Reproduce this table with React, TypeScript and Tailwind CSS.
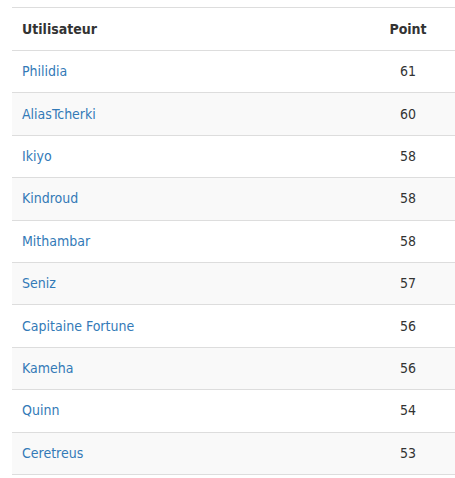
const rows: [string, number][] = [
  ['Philidia', 61],
  ['AliasTcherki', 60],
  ['Ikiyo', 58],
  ['Kindroud', 58],
  ['Mithambar', 58],
  ['Seniz', 57],
  ['Capitaine Fortune', 56],
  ['Kameha', 56],
  ['Quinn', 54],
  ['Ceretreus', 53],
];

export default function App() {
  return (
    <div
      className="bg-white pl-3 pt-[7px] text-[14px] text-[#333]"
      style={{ fontFamily: '"DejaVu Sans Condensed", "DejaVu Sans", Verdana, sans-serif' }}
    >
      <table className="w-[443px] border-collapse">
        <thead>
          <tr className="h-[43px] border-y border-[#ddd]">
            <th className="px-[10px] text-left font-bold">Utilisateur</th>
            <th className="w-[94px] text-center font-bold">Point</th>
          </tr>
        </thead>
        <tbody>
          {rows.map(([name, pts], i) => (
            <tr
              key={name}
              className={`h-[42.4px] border-b border-[#ddd] ${i % 2 === 1 ? 'bg-[#f9f9f9]' : 'bg-white'}`}
            >
              <td className="px-[10px]">
                <a className="text-[#337ab7]">{name}</a>
              </td>
              <td className="text-center">{pts}</td>
            </tr>
          ))}
        </tbody>
      </table>
    </div>
  );
}
